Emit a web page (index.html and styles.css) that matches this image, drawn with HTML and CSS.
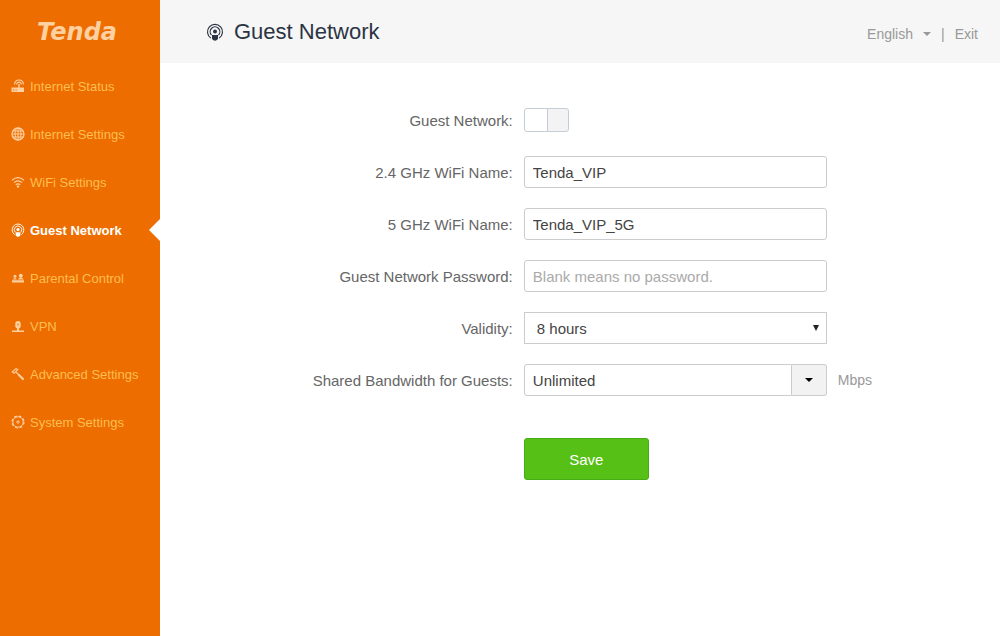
FILE: index.html
```
<!DOCTYPE html>
<html lang="en">
<head>
    <meta charset="UTF-8">
    <meta name="viewport" content="width=device-width, initial-scale=1.0">
    <title>Tenda - Guest Network</title>
    <link rel="stylesheet" href="styles.css">
</head>
<body>
    <div class="page">
        <!-- Side menu -->
        <aside class="sidebar">
            <div class="logo">Tenda</div>
            <nav class="menu">
                <a href="#status">
                    <svg class="icon" viewBox="0 0 14 14"><path d="M3.500 5.500Q4 1 8 1t4.500 4.500M5.700 5.500Q6 3.200 8 3.200t2.300 2.300" fill="none" stroke="currentColor" stroke-width="1.200"/><path d="M7.300 5h1.400v3.500H13v4.500H0.500V8.500h6.800z" fill="currentColor"/><path d="M2 11h1.300M4.500 11h1.300" stroke="#ed6d00"/></svg>
                    Internet Status
                </a>
                <a href="#internet">
                    <svg class="icon" viewBox="0 0 14 14" fill="none" stroke="currentColor"><circle cx="7" cy="7" r="6" stroke-width="1.300"/><ellipse cx="7" cy="7" rx="3" ry="6"/><path d="M7 1v12M1 7h12M2 4h10M2 10h10"/></svg>
                    Internet Settings
                </a>
                <a href="#wifi">
                    <svg class="icon" viewBox="0 0 14 14" fill="none" stroke="currentColor" stroke-width="1.200"><path d="M1 5.200Q7 0 13 5.200M3 7.600q4-3.600 8 0M4.800 9.800q2.200-2 4.400 0"/><circle cx="7" cy="11.600" r="1.200" fill="currentColor" stroke="none"/></svg>
                    WiFi Settings
                </a>
                <a href="#guest" class="active">
                    <svg class="icon" viewBox="0 0 18 18" fill="none" stroke="currentColor" stroke-width="1.200"><path d="M4.800 15A7.500 7.500 0 1 1 13.200 15"/><path d="M5.500 12A4.800 4.800 0 1 1 12.500 12"/><circle cx="9" cy="8.500" r="2" fill="currentColor" stroke="none"/><path d="M6 12h6v4q-3 3.500-6 0z" fill="currentColor" stroke="none"/></svg>
                    Guest Network
                </a>
                <a href="#parental">
                    <svg class="icon" viewBox="0 0 14 14"><g fill="currentColor"><circle cx="4" cy="5.200" r="1.500"/><circle cx="9.800" cy="4.700" r="2"/><path d="M1.500 8.500Q4 5.500 6 8.500zM6.700 8.500Q9.800 4.500 12.800 8.500zM1 9.300h12v2.200H1z"/></g></svg>
                    Parental Control
                </a>
                <a href="#vpn">
                    <svg class="icon" viewBox="0 0 14 14"><path d="M7 2a2.700 2.700 0 0 1 2.700 2.700V8L8 9.500v2h5V13H1v-1.500h5v-2L4.300 8V4.700A2.700 2.700 0 0 1 7 2z" fill="currentColor"/><path d="M7 4.500v2" stroke="#ed6d00"/></svg>
                    VPN
                </a>
                <a href="#advanced">
                    <svg class="icon" viewBox="0 0 14 14" fill="none" stroke="currentColor"><path d="M1.200 5L5 1.700l1.800 0.800L3.200 6.300z" stroke-width="1.100"/><path d="M5.200 5.200L8 8" stroke-width="1.300"/><path d="M8.200 8.200l3.800 3.800" stroke-width="2.200" stroke-linecap="round"/></svg>
                    Advanced Settings
                </a>
                <a href="#system">
                    <svg class="icon" viewBox="0 0 14 14" fill="none" stroke="currentColor"><circle cx="7" cy="7" r="5.200"/><circle cx="7" cy="7" r="6" stroke-width="1.200" stroke-dasharray="2.700 2.012"/><circle cx="7" cy="7" r="1.200"/></svg>
                    System Settings
                </a>
            </nav>
        </aside>

        <main class="main">
            <header class="header">
                <svg class="title-icon" viewBox="0 0 18 18" fill="none" stroke="currentColor" stroke-width="1.200"><path d="M4.800 15A7.500 7.500 0 1 1 13.200 15"/><path d="M5.500 12A4.800 4.800 0 1 1 12.500 12"/><circle cx="9" cy="8.500" r="2" fill="currentColor" stroke="none"/><path d="M6 12h6v4q-3 3.500-6 0z" fill="currentColor" stroke="none"/></svg>
                <h1>Guest Network</h1>
                <div class="tools">
                    <button type="button" class="language">English <span class="caret"></span></button>
                    <span>|</span>
                    <a href="#exit">Exit</a>
                </div>
            </header>

            <form class="guest-form">
                <div class="form-group">
                    <label for="enable">Guest Network:</label>
                    <input type="checkbox" id="enable" class="toggle">
                </div>
                <div class="form-group">
                    <label for="name24">2.4 GHz WiFi Name:</label>
                    <input type="text" id="name24" class="field" value="Tenda_VIP">
                </div>
                <div class="form-group">
                    <label for="name5">5 GHz WiFi Name:</label>
                    <input type="text" id="name5" class="field" value="Tenda_VIP_5G">
                </div>
                <div class="form-group">
                    <label for="password">Guest Network Password:</label>
                    <input type="text" id="password" class="field" placeholder="Blank means no password.">
                </div>
                <div class="form-group">
                    <label for="validity">Validity:</label>
                    <div class="select">
                        <select id="validity">
                            <option>4 hours</option>
                            <option selected>8 hours</option>
                            <option>Always</option>
                        </select>
                    </div>
                </div>
                <div class="form-group">
                    <label for="bandwidth">Shared Bandwidth for Guests:</label>
                    <div class="combo">
                        <input type="text" id="bandwidth" class="field" value="Unlimited">
                        <button type="button" aria-label="Choose bandwidth"><span class="caret"></span></button>
                    </div>
                    <span class="unit">Mbps</span>
                </div>
                <div class="form-group actions">
                    <button type="submit" class="save">Save</button>
                </div>
            </form>
        </main>
    </div>
</body>
</html>
```
FILE: styles.css
```
* {
    box-sizing: border-box;
}
body {
    font-family: "Liberation Sans", Arial, sans-serif;
    font-size: 14px;
    margin: 0;
    color: #666;
    background-color: #fff;
}
.page {
    display: flex;
    min-height: 100vh;
}

/* Side menu */
.sidebar {
    flex: 0 0 160px;
    background-color: #ed6d00;
}
.logo {
    height: 62px;
    padding-left: 37px;
    font: italic bold 24px/64px "DejaVu Sans", sans-serif;
    color: #ffd0a0;
}
.menu a {
    display: flex;
    align-items: center;
    gap: 5px;
    height: 48px;
    padding-left: 11px;
    font-size: 13px;
    color: #ffbe50;
    text-decoration: none;
}
.menu .icon {
    width: 14px;
    height: 14px;
    color: #ffd0a0;
}
.menu .active {
    color: #fff;
    font-weight: bold;
}
.menu .active .icon {
    color: #fff;
}
.menu .active::after {
    content: "";
    margin-left: auto;
    border: 11px solid transparent;
    border-left: 0;
    border-right-color: #fff;
}

/* Title bar */
.main {
    flex: 1;
}
.header {
    display: flex;
    align-items: center;
    height: 63px;
    padding: 0 22px 0 46px;
    background-color: #f6f6f6;
}
.title-icon {
    width: 18px;
    height: 18px;
    margin-right: 10px;
    color: #2b3444;
}
h1 {
    margin: 0;
    font-size: 22px;
    font-weight: normal;
    color: #2b3444;
}
.tools {
    display: flex;
    gap: 10px;
    margin-left: auto;
    padding-top: 4px;
    color: #999;
}
.tools a {
    color: #999;
    text-decoration: none;
}
.language {
    display: flex;
    align-items: center;
    gap: 10px;
    padding: 0;
    border: none;
    background: none;
    font: inherit;
    color: #999;
}
.caret {
    border: 4px solid transparent;
    border-top-color: currentColor;
    border-bottom: 0;
}

/* Form */
.guest-form {
    display: grid;
    gap: 20px;
    padding-top: 41px;
    font-size: 15px;
}
.form-group {
    display: grid;
    grid-template-columns: 42% 303px auto;
    column-gap: 11px;
    align-items: center;
    min-height: 32px;
}
.form-group label {
    text-align: right;
}
.field {
    width: 100%;
    height: 32px;
    padding: 0 8px;
    border: 1px solid #ccc;
    border-radius: 3px;
    font: inherit;
    color: #444;
}
.field::placeholder {
    color: #aaa;
}
.toggle {
    appearance: none;
    width: 45px;
    height: 24px;
    margin: 0;
    border: 1px solid #c5ced8;
    border-radius: 3px;
    background: linear-gradient(to right, #fff 22px, #c5ced8 22px, #c5ced8 23px, #f3f3f3 23px);
}
.select {
    position: relative;
}
.select select {
    appearance: none;
    width: 100%;
    height: 32px;
    padding: 0 12px;
    border: 1px solid #ccc;
    border-radius: 0;
    background-color: #fff;
    font: inherit;
    color: #444;
}
.select::after {
    content: "";
    position: absolute;
    top: 13px;
    right: 8px;
    border: 3px solid transparent;
    border-top: 6px solid #222;
    border-bottom: 0;
    pointer-events: none;
}
.combo {
    display: flex;
}
.combo .field {
    border-radius: 3px 0 0 3px;
}
.combo button {
    display: flex;
    align-items: center;
    justify-content: center;
    flex: 0 0 35px;
    padding: 0;
    border: 1px solid #ccc;
    border-left: 0;
    border-radius: 0 3px 3px 0;
    background-color: #f2f2f2;
    color: #000;
}
.unit {
    font-size: 14px;
    color: #999;
}
.actions {
    margin-top: 22px;
}
.save {
    grid-column: 2;
    width: 125px;
    height: 42px;
    border: 1px solid #47ac14;
    border-radius: 3px;
    background-color: #57c016;
    font: inherit;
    color: #fff;
}
```
